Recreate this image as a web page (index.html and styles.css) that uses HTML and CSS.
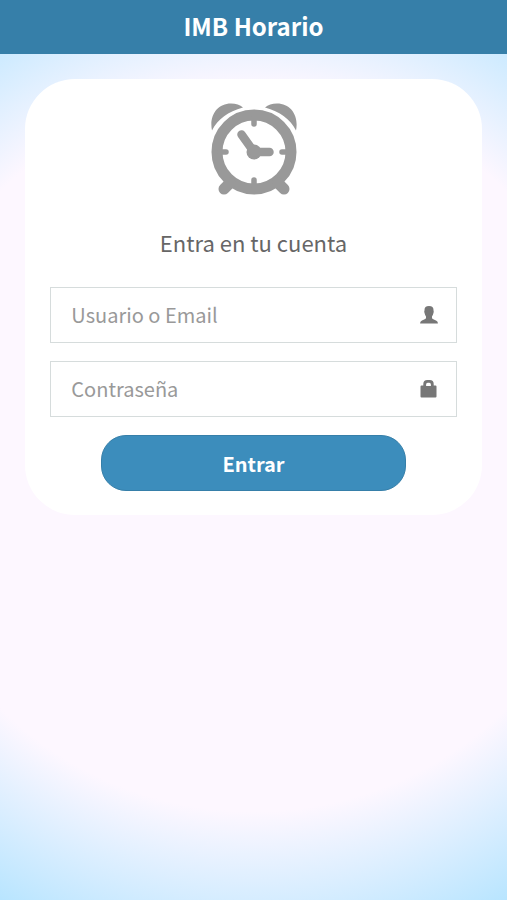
FILE: index.html
```html
<!DOCTYPE html>
<html lang="es">
<head>
<meta charset="utf-8">
<meta name="viewport" content="width=device-width, initial-scale=1">
<title>IMB Horario</title>
<link rel="stylesheet" href="styles.css">
</head>
<body>
<header class="topbar"><h1 class="topbar-title">IMB Horario</h1></header>
<main class="login">
  <form class="card">
    <svg class="clock" viewBox="0 1 88 94" aria-hidden="true">
      <g fill="#999">
        <path d="M2 28.500C-1 14 7 1.500 21 1.500C26 1.500 30 3 33 5.500C18 9.500 8 17 2 28.500Z"/>
        <path d="M86 28.500C89 14 81 1.500 67 1.500C62 1.500 58 3 55 5.500C70 9.500 80 17 86 28.500Z"/>
        <circle cx="44" cy="50" r="7.500"/>
      </g>
      <g fill="none" stroke="#999" stroke-linecap="round">
        <circle cx="44" cy="50" r="37" stroke-width="11"/>
        <path stroke-width="11" d="M20 81L14 87M68 81L74 87"/>
        <path stroke-width="5.500" d="M44 16V22M44 78V84M10 50H16M72 50H78"/>
        <path stroke-width="8.500" d="M31.500 32.500L44 50H59.500"/>
      </g>
    </svg>
    <h2 class="heading">Entra en tu cuenta</h2>
    <div class="field">
      <input class="input" id="user" type="text" placeholder="Usuario o Email" aria-label="Usuario o Email">
      <svg class="icon" viewBox="0 0 18 18" aria-hidden="true"><path fill="#777" d="M9 0C12.200 0 13.500 1.500 13.500 4C13.500 5 14 5.500 13.600 6.500C13.200 8.500 12.500 9.500 12 10.500V12.200C12.500 13.300 16 14 17.300 15.500Q17.900 16.500 17.900 17.500H.1Q.1 16.500 .7 15.500C2 14 5.500 13.300 6 12.200V10.500C5.500 9.500 4.800 8.500 4.400 6.500C4 5.500 4.500 5 4.500 4C4.500 1.500 5.800 0 9 0Z"/></svg>
    </div>
    <div class="field">
      <input class="input" id="password" type="password" placeholder="Contraseña" aria-label="Contraseña">
      <svg class="icon" viewBox="0 0 18 18" aria-hidden="true"><path fill="#777" fill-rule="evenodd" d="M3.300 5.500V4Q3.300 0 7.300 0H9.700Q13.700 0 13.700 4V5.500H15.500Q16.500 5.500 16.500 6.500V16.500Q16.500 17.500 15.500 17.500H1.500Q.5 17.500 .5 16.500V6.500Q.5 5.500 1.500 5.500ZM6.100 6H10.900V4.600Q10.900 2.800 9.300 2.800H7.700Q6.100 2.800 6.100 4.600Z"/></svg>
    </div>
    <button class="submit" type="submit">Entrar</button>
  </form>
</main>
</body>
</html>
```
FILE: styles.css
```css
* {
  box-sizing: border-box;
}

body {
  margin: 0;
  min-height: 100vh;
  font-family: "Noto Sans CJK SC", "Noto Sans", sans-serif;
  background: radial-gradient(circle, #fdf7ff 70%, #b8e5ff 100%);
}

.topbar {
  padding: 8px 16px 10px;
  background: #367fa9;
  color: #fff;
  text-align: center;
}

.topbar-title {
  margin: 0;
  font-size: 24px;
  line-height: 36px;
  font-weight: 700;
}

.login {
  padding: 25px 5%;
}

.card {
  display: flex;
  flex-direction: column;
  align-items: center;
  padding: 24px 25px;
  border-radius: 50px;
  background: #fff;
}

.clock {
  width: 88px;
  height: 94px;
}

.heading {
  margin: 27px 0;
  font-size: 22px;
  line-height: 36px;
  font-weight: 400;
  color: #666;
}

.field {
  position: relative;
  width: 100%;
  margin-bottom: 18px;
}

.input {
  display: block;
  width: 100%;
  height: 56px;
  padding: 0 56px 2px 20px;
  border: 1px solid #d6dcdc;
  border-radius: 0;
  background: #fff;
  color: #555;
  font: inherit;
  font-size: 20px;
}

.input::placeholder {
  color: #999;
  opacity: 1;
}

.icon {
  position: absolute;
  top: 19px;
  right: 19px;
  width: 18px;
  height: 18px;
}

.submit {
  width: 75%;
  height: 56px;
  border: 1px solid #367fa9;
  border-radius: 25px;
  background: #3c8dbc;
  color: #fff;
  font: inherit;
  font-size: 20px;
  font-weight: 700;
}
```
